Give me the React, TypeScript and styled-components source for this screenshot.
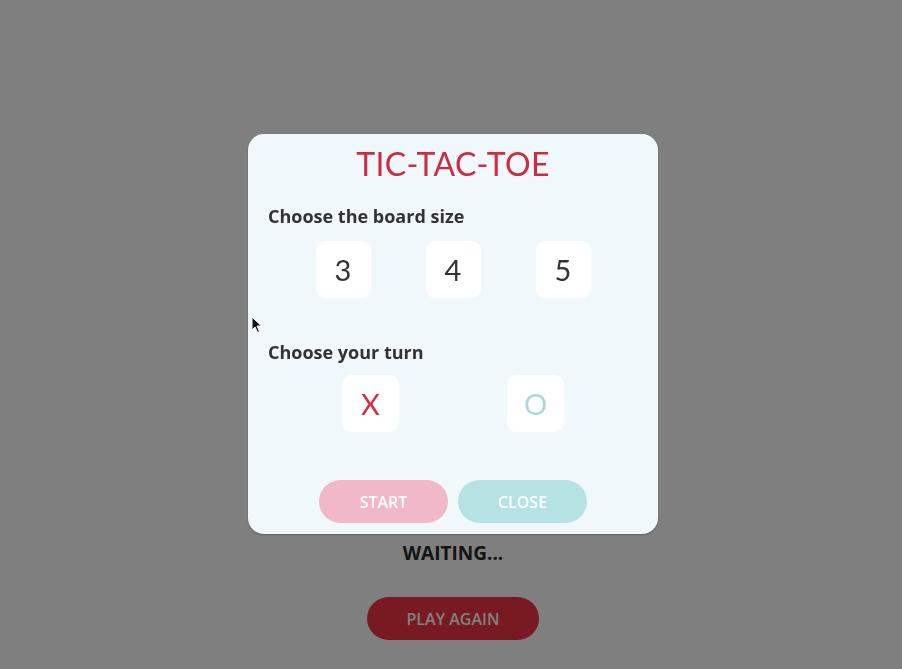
import React from "react";
import styled, { createGlobalStyle } from "styled-components";

const Global = createGlobalStyle`
  html, body { margin: 0; padding: 0; background: #ffffff; }
  body { font-family: "Open Sans", "Liberation Sans", sans-serif; }
`;

const Page = styled.main`
  min-height: 669px;
  display: flex;
  flex-direction: column;
  align-items: center;
  padding: 540px 0 0 4px;
  box-sizing: border-box;
`;

const Status = styled.h2`
  margin: 0;
  font-family: "Open Sans", sans-serif;
  font-weight: 700;
  font-size: 19px;
  line-height: 26px;
  color: #282828;
`;

const PlayAgain = styled.button`
  margin-top: 31px;
  width: 172px;
  height: 43px;
  border: none;
  border-radius: 22px;
  background: #f23544;
  color: #ffffff;
  font-family: "Open Sans", sans-serif;
  font-weight: 600;
  font-size: 16px;
`;

const Overlay = styled.div`
  position: fixed;
  inset: 0;
  background: rgba(0, 0, 0, 0.5);
  display: flex;
  justify-content: center;
  align-items: flex-start;
  padding: 134px 0 0 4px;
  box-sizing: border-box;
`;

const Modal = styled.section`
  width: 410px;
  height: 400px;
  box-sizing: border-box;
  background: #f0f8fb;
  border-radius: 16px;
  padding: 12px 20px 0;
  display: flex;
  flex-direction: column;
  box-shadow: 0 1px 2px rgba(0, 0, 0, 0.25);
`;

const Title = styled.h1`
  margin: 0;
  text-align: center;
  font-family: "Lato", sans-serif;
  font-weight: 400;
  font-size: 32px;
  line-height: 36px;
  color: #cc2d40;
  letter-spacing: 0.3px;
`;

const Label = styled.h3<{ $gap: number }>`
  margin: ${(p) => p.$gap}px 0 0;
  font-family: "Open Sans", sans-serif;
  font-weight: 700;
  font-size: 18px;
  line-height: 22px;
  color: #333333;
`;

const Options = styled.div<{ $gap: number; $mt: number }>`
  display: flex;
  justify-content: center;
  gap: ${(p) => p.$gap}px;
  margin-top: ${(p) => p.$mt}px;
`;

const Option = styled.button<{ $color: string; $w: number }>`
  width: ${(p) => p.$w}px;
  height: 57px;
  border: none;
  border-radius: 9px;
  background: #ffffff;
  color: ${(p) => p.$color};
  font-family: "Lato", sans-serif;
  font-weight: 400;
  font-size: 29px;
  display: flex;
  align-items: center;
  justify-content: center;
  padding: 0;
`;

const Actions = styled.div`
  display: flex;
  justify-content: center;
  gap: 10px;
  margin-top: 48px;
`;

const ActionButton = styled.button<{ $bg: string }>`
  width: 129px;
  height: 43px;
  border: none;
  border-radius: 22px;
  background: ${(p) => p.$bg};
  color: #ffffff;
  font-family: "Open Sans", sans-serif;
  font-weight: 600;
  font-size: 16px;
`;

const Cursor = styled.svg`
  position: fixed;
  left: 251px;
  top: 316px;
`;

export default function App() {
  return (
    <>
      <Global />
      <Page>
        <Status>WAITING...</Status>
        <PlayAgain>PLAY AGAIN</PlayAgain>
      </Page>
      <Overlay>
        <Modal>
          <Title>TIC-TAC-TOE</Title>
          <Label $gap={23}>Choose the board size</Label>
          <Options $gap={55} $mt={14}>
            <Option $color="#333333" $w={55}>3</Option>
            <Option $color="#333333" $w={55}>4</Option>
            <Option $color="#333333" $w={55}>5</Option>
          </Options>
          <Label $gap={43}>Choose your turn</Label>
          <Options $gap={108} $mt={12}>
            <Option $color="#d0303f" $w={57}>X</Option>
            <Option $color="#a6dadf" $w={57}>O</Option>
          </Options>
          <Actions>
            <ActionButton $bg="#f0b8c8">START</ActionButton>
            <ActionButton $bg="#b5e3e3">CLOSE</ActionButton>
          </Actions>
        </Modal>
      </Overlay>
      <Cursor width="12" height="18" viewBox="0 0 12 18">
        <path d="M1 1 L1 14 L4 11 L6.5 16.5 L8.5 15.5 L6 10 L10.5 10 Z" fill="#111" stroke="#fff" strokeWidth="1" />
      </Cursor>
    </>
  );
}
